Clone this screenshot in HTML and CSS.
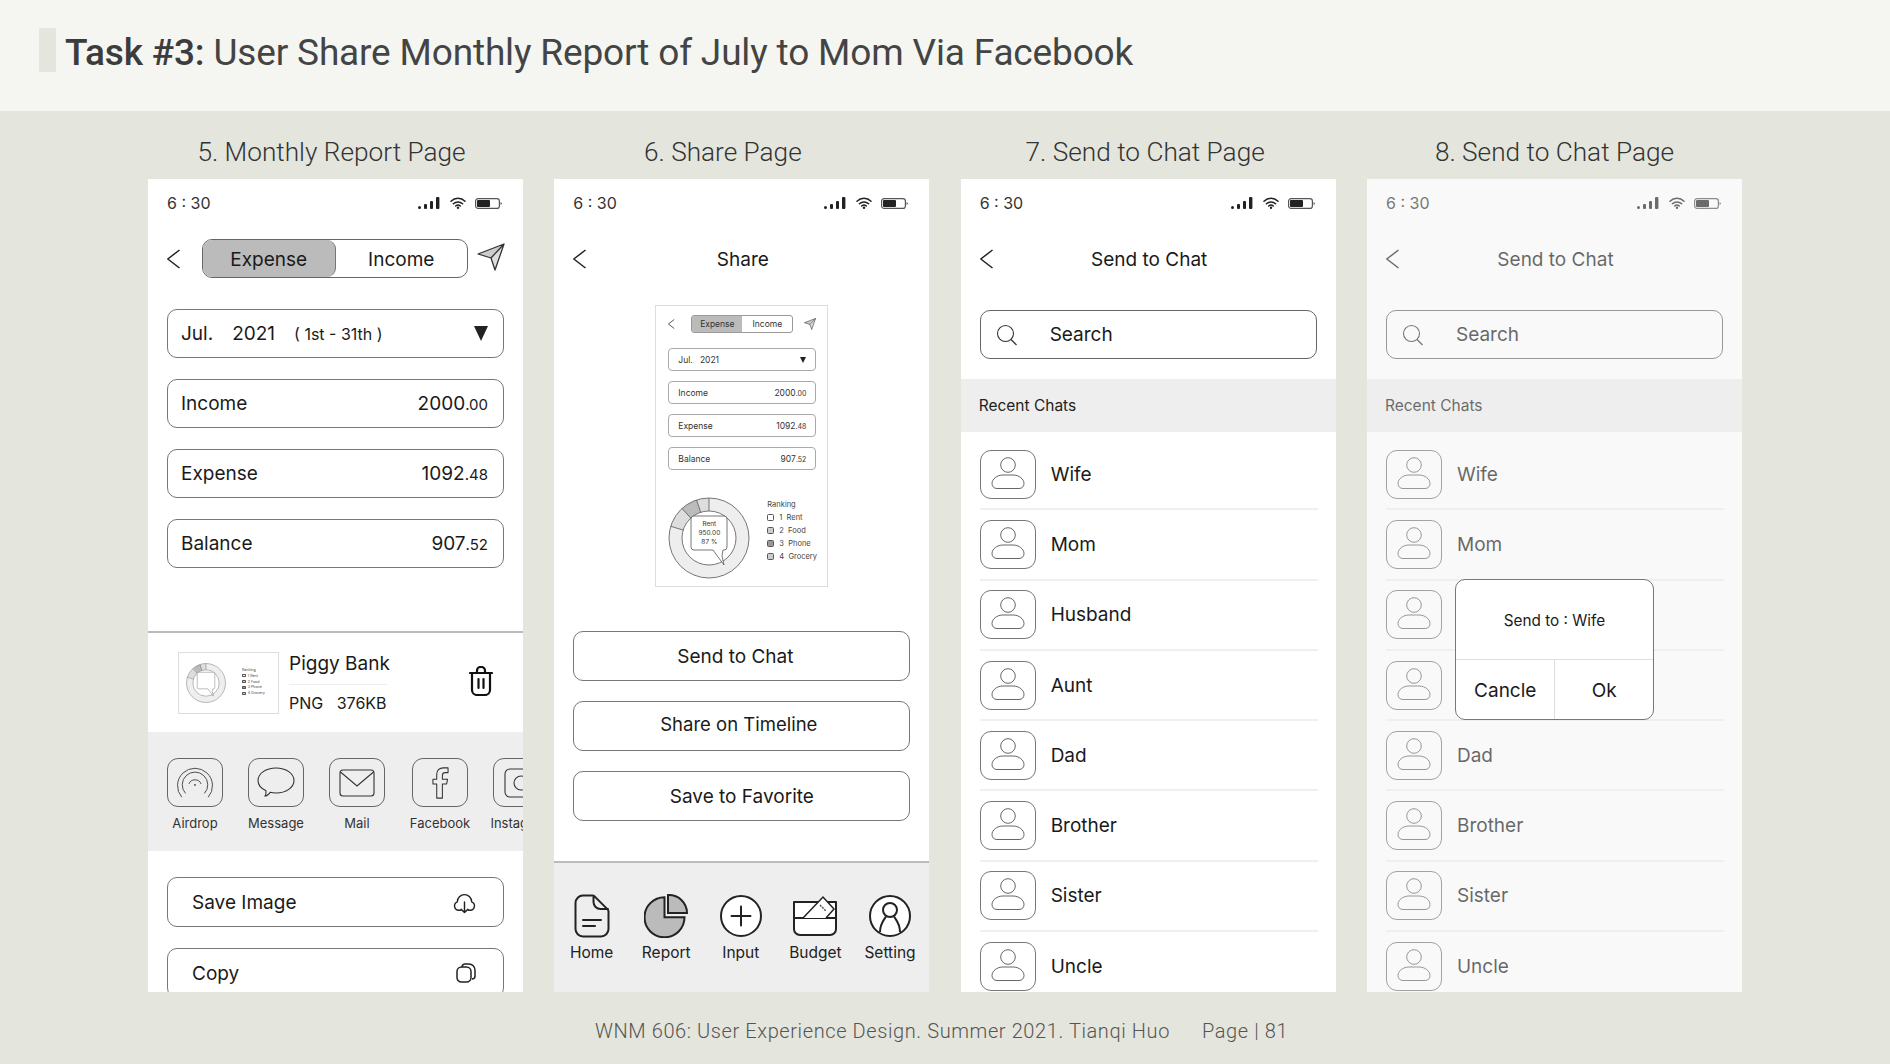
FILE: index.html
```html
<!DOCTYPE html>
<html lang="en">
<head>
    <meta charset="UTF-8">
    <title>Task #3</title>
    <link rel="stylesheet" href="styles.css">
</head>
<body>
    <!-- shared icons -->
    <svg class="defs" width="0" height="0">
        <symbol id="i-signal" viewBox="0 0 22 12"><rect x="0" y="9" width="3" height="3" rx="1.5"/><rect x="6" y="7" width="3" height="5" rx="1"/><rect x="12" y="4" width="3" height="8" rx="1"/><rect x="18" y="0" width="3.4" height="12" rx="1"/></symbol>
        <symbol id="i-wifi" viewBox="0 0 16 12"><path d="M1 4.2a10 10 0 0 1 14 0M3.4 6.8a6.6 6.6 0 0 1 9.2 0M5.7 9a3.4 3.4 0 0 1 4.6 0" fill="none" stroke="#222" stroke-width="1.5" stroke-linecap="round"/><circle cx="8" cy="10.8" r="1.2" fill="#222"/></symbol>
        <symbol id="i-battery" viewBox="0 0 27 11"><rect x=".6" y=".6" width="23.8" height="9.8" rx="2.5" fill="#fff" stroke="#555" stroke-width="1.2"/><rect x="2" y="2" width="13" height="7" rx="1" fill="#222"/><path d="M25.6 3.8 27 5.5l-1.4 1.7z" fill="#444"/></symbol>
        <symbol id="i-back" viewBox="0 0 14 20"><path d="M12.500 1 .8 10l11.700 9" fill="none" stroke="#222" stroke-width="1.5"/></symbol>
        <symbol id="i-send" viewBox="0 0 28 28"><path d="M1 11 27 1 14 15Z" fill="#ccc"/><path d="M27 1 14 15l4 12Z" fill="#ddd"/><path d="M1 11 27 1 18 27 14 15ZM14 15 27 1" fill="none" stroke="#333" stroke-width="1.3" stroke-linejoin="round"/></symbol>
        <symbol id="i-donut" viewBox="0 0 82 82">
            <g fill="none" stroke-width="13" transform="rotate(-90 41 41)">
                <circle cx="41" cy="41" r="33.5" pathLength="360" stroke="#eee" stroke-dasharray="287 73"/>
                <circle cx="41" cy="41" r="33.5" pathLength="360" stroke="#ddd" stroke-dasharray="30.5 329.5" stroke-dashoffset="-287"/>
                <circle cx="41" cy="41" r="33.5" pathLength="360" stroke="#bbb" stroke-dasharray="24.5 335.5" stroke-dashoffset="-317.5"/>
                <circle cx="41" cy="41" r="33.5" pathLength="360" stroke="#ddd" stroke-dasharray="18 342" stroke-dashoffset="-342"/>
            </g>
            <g fill="none" stroke="#555" stroke-width=".8">
                <circle cx="41" cy="41" r="40"/><circle cx="41" cy="41" r="27"/>
                <path d="M41 1v13M28.6 3 32.7 15.3M14 11.5 22.8 21.1M2.8 29.3 15.2 33.1"/>
            </g>
            <path d="M26 19h30a3 3 0 0 1 3 3v28a3 3 0 0 1-3 3h-1l-1 6 2 9-11-15H26a3 3 0 0 1-3-3V22a3 3 0 0 1 3-3Z" fill="#fff" stroke="#555" stroke-width=".8"/>
        </symbol>
        <symbol id="i-trash" viewBox="0 0 24 30"><path d="M1 7h22M8 6V4.500a3.500 3.500 0 0 1 3.500-3.500h1a3.500 3.500 0 0 1 3.500 3.500V6M3 7v17a5 5 0 0 0 5 5h8a5 5 0 0 0 5-5V7M9.500 13v9M14.500 13v9" fill="none" stroke="#111" stroke-width="2.200" stroke-linecap="round"/></symbol>
        <symbol id="i-airdrop" viewBox="0 0 40 36"><path d="M6 33A18.500 18.500 0 1 1 34 33M10 29A13.500 13.500 0 1 1 30 29" fill="none" stroke="#444" stroke-width="1"/><path d="M13.500 19A7 7 0 0 1 26.500 19" fill="none" stroke="#444" stroke-width="1"/><circle cx="20" cy="20" r="1" fill="#444"/></symbol>
        <symbol id="i-message" viewBox="0 0 38 32"><path d="M19 1c10 0 18 5.600 18 12.500S29 26 19 26c-2 0-4-.200-5.800-.700C11.500 27.500 9.500 29 8 29c.800-1.200 1.200-3 1-5.300C4.200 21.500 1 17.800 1 13.500 1 6.600 9 1 19 1Z" fill="none" stroke="#333" stroke-width="1.100"/></symbol>
        <symbol id="i-mail" viewBox="0 0 36 28"><rect x="1" y="1" width="34" height="26" rx="3" fill="none" stroke="#333" stroke-width="1.100"/><path d="M1.500 3 18 17 34.500 3" fill="none" stroke="#333" stroke-width="1.100"/></symbol>
        <symbol id="i-facebook" viewBox="0 0 18 34"><path d="M5 33V18H1v-5h4V8c0-5 3-7 7-7h5v5h-3c-2 0-3 1-3 3v4h5.500l-1 5H11v15Z" fill="none" stroke="#333" stroke-width="1.100" stroke-linejoin="round"/></symbol>
        <symbol id="i-insta" viewBox="0 0 34 30"><rect x="1" y="1" width="32" height="28" rx="5" fill="none" stroke="#333" stroke-width="1.100"/><circle cx="17" cy="15" r="7" fill="none" stroke="#333" stroke-width="1.100"/></symbol>
        <symbol id="i-cloud" viewBox="0 0 24 24"><path d="M8 20H6a4.500 4.500 0 0 1-1.500-8.700A7.500 7.500 0 0 1 19.500 11.300 4.500 4.500 0 0 1 18 20h-2M12 11.500v11M8.500 19l3.500 3.500 3.500-3.500" fill="none" stroke="#222" stroke-width="1.500" stroke-linecap="round" stroke-linejoin="round"/></symbol>
        <symbol id="i-copy" viewBox="0 0 20 20"><path d="M6 5V4a3 3 0 0 1 3-3h4a6 6 0 0 1 6 6v6a3 3 0 0 1-3 3" fill="none" stroke="#222" stroke-width="1.500"/><rect x="1" y="4" width="14" height="15" rx="4.500" fill="#fff" stroke="#222" stroke-width="1.500"/></symbol>
        <symbol id="i-home" viewBox="0 0 36 44"><path d="M9 1.500h9.500a3 3 0 0 1 2.100.900L33.600 15.400a3 3 0 0 1 .900 2.100V35a7.500 7.500 0 0 1-7.500 7.500H9A7.500 7.500 0 0 1 1.500 35V9A7.500 7.500 0 0 1 9 1.500ZM19.500 2v6a7 7 0 0 0 7 7H34M9 26h18M9 32h12" fill="none" stroke="#222" stroke-width="2" stroke-linecap="round"/></symbol>
        <symbol id="i-report" viewBox="0 0 44 44"><path d="M20.500 3.300A20 20 0 1 0 40.500 23.300H20.500Z" fill="#bbb" stroke="#222" stroke-width="2"/><path d="M24 1A18 18 0 0 1 43 19H24Z" fill="#bbb" stroke="#222" stroke-width="2"/></symbol>
        <symbol id="i-input" viewBox="0 0 42 42"><circle cx="21" cy="21" r="20" fill="#fff" stroke="#222" stroke-width="2"/><path d="M21 11.500v19M11.500 21h19" stroke="#222" stroke-width="2" stroke-linecap="round"/></symbol>
        <symbol id="i-budget" viewBox="0 0 44 40"><path d="M1 6h42v27a6 6 0 0 1-6 6H7a6 6 0 0 1-6-6ZM1 22h42" fill="#fff" stroke="#222" stroke-width="2" stroke-linejoin="round"/><path d="M10 22 30 1l11 12-8 9" fill="#fff" stroke="#222" stroke-width="1.500"/><path d="M27 9l6 6" stroke="#555" stroke-width="1.500" stroke-dasharray="2 1"/></symbol>
        <symbol id="i-setting" viewBox="0 0 42 42"><circle cx="21" cy="21" r="20" fill="#fff" stroke="#222" stroke-width="2"/><circle cx="21" cy="15" r="7" fill="none" stroke="#222" stroke-width="2"/><path d="M11 37c0-8 3-11 6-15.500M31 37c0-8-3-11-6-15.500" fill="none" stroke="#222" stroke-width="2"/></symbol>
        <symbol id="i-search" viewBox="0 0 22 22"><circle cx="9.500" cy="9.500" r="8" fill="none" stroke="#333" stroke-width="1.100"/><path d="M15 15.500 20.500 21" stroke="#333" stroke-width="1.300"/></symbol>
        <symbol id="i-avatar" viewBox="0 0 56 49"><circle cx="28" cy="15" r="7.300" fill="none" stroke="#555" stroke-width=".9"/><path d="M23 25h10c6 0 11 4 11 8.500 0 3-2 5-5 5H17c-3 0-5-2-5-5C12 29 17 25 23 25Z" fill="none" stroke="#555" stroke-width=".9"/></symbol>
    </svg>

    <header class="topbar">
        <span class="mark"></span>
        <h1><b>Task #3:</b> User Share Monthly Report of July to Mom Via Facebook</h1>
    </header>

    <main class="board">
        <h2 class="col-title nudge-a">5. Monthly Report Page</h2>
        <h2 class="col-title nudge-b">6. Share Page</h2>
        <h2 class="col-title nudge-c">7. Send to Chat Page</h2>
        <h2 class="col-title">8. Send to Chat Page</h2>

        <!-- 5 -->
        <section class="phone">
            <div class="status">
                <span>6 : 30</span>
                <span class="status-icons"><svg class="ic-signal"><use href="#i-signal"/></svg><svg class="ic-wifi"><use href="#i-wifi"/></svg><svg class="ic-battery"><use href="#i-battery"/></svg></span>
            </div>
            <div class="nav nav-seg">
                <svg class="ic-back"><use href="#i-back"/></svg>
                <div class="seg"><span class="seg-on">Expense</span><span>Income</span></div>
                <svg class="ic-send"><use href="#i-send"/></svg>
            </div>
            <div class="fields">
                <div class="field"><span class="date"><span>Jul.</span><span>2021</span><small>( 1st - 31th )</small></span><span class="tri"></span></div>
                <div class="field"><span>Income</span><span>2000<small>.00</small></span></div>
                <div class="field"><span>Expense</span><span>1092<small>.48</small></span></div>
                <div class="field"><span>Balance</span><span>907<small>.52</small></span></div>
            </div>
            <div class="file">
                <div class="file-thumb">
                    <svg class="file-donut"><use href="#i-donut"/></svg>
                    <div class="legend">
                        <p>Ranking</p>
                        <p><i></i>1 Rent</p>
                        <p><i class="s2"></i>2 Food</p>
                        <p><i class="s3"></i>3 Phone</p>
                        <p><i class="s2"></i>4 Grocery</p>
                    </div>
                </div>
                <div class="file-info">
                    <div class="file-name">Piggy Bank</div>
                    <div class="file-meta">PNG&nbsp;&nbsp;&nbsp;376KB</div>
                </div>
                <svg class="ic-trash"><use href="#i-trash"/></svg>
            </div>
            <div class="share-band">
                <div class="share-item"><div class="tile"><svg class="s-air"><use href="#i-airdrop"/></svg></div><span>Airdrop</span></div>
                <div class="share-item"><div class="tile"><svg class="s-msg"><use href="#i-message"/></svg></div><span>Message</span></div>
                <div class="share-item"><div class="tile"><svg class="s-mail"><use href="#i-mail"/></svg></div><span>Mail</span></div>
                <div class="share-item fb"><div class="tile"><svg class="s-fb"><use href="#i-facebook"/></svg></div><span>Facebook</span></div>
                <div class="share-item"><div class="tile"><svg class="s-ins"><use href="#i-insta"/></svg></div><span>Instagram</span></div>
            </div>
            <div class="actions">
                <div class="action"><span>Save Image</span><svg class="ic-cloud"><use href="#i-cloud"/></svg></div>
                <div class="action"><span>Copy</span><svg class="ic-copy"><use href="#i-copy"/></svg></div>
            </div>
        </section>

        <!-- 6 -->
        <section class="phone">
            <div class="status">
                <span>6 : 30</span>
                <span class="status-icons"><svg class="ic-signal"><use href="#i-signal"/></svg><svg class="ic-wifi"><use href="#i-wifi"/></svg><svg class="ic-battery"><use href="#i-battery"/></svg></span>
            </div>
            <div class="nav">
                <svg class="ic-back"><use href="#i-back"/></svg>
                <div class="nav-title">Share</div>
            </div>
            <div class="mini">
                <div class="mini-nav">
                    <svg class="mini-back"><use href="#i-back"/></svg>
                    <div class="mini-seg"><span class="seg-on">Expense</span><span>Income</span></div>
                    <svg class="mini-send"><use href="#i-send"/></svg>
                </div>
                <div class="mini-fields">
                    <div class="mini-field"><span>Jul.&nbsp;&nbsp;&nbsp;2021</span><span class="mini-tri"></span></div>
                    <div class="mini-field"><span>Income</span><span>2000<small>.00</small></span></div>
                    <div class="mini-field"><span>Expense</span><span>1092<small>.48</small></span></div>
                    <div class="mini-field"><span>Balance</span><span>907<small>.52</small></span></div>
                </div>
                <div class="mini-chart">
                    <div class="mini-donut">
                        <svg><use href="#i-donut"/></svg>
                        <div class="bubble-text"><span>Rent</span><span>950.00</span><span>87 %</span></div>
                    </div>
                    <div class="legend legend-big">
                        <p>Ranking</p>
                        <p><i></i>1&nbsp;&nbsp;Rent</p>
                        <p><i class="s2"></i>2&nbsp;&nbsp;Food</p>
                        <p><i class="s3"></i>3&nbsp;&nbsp;Phone</p>
                        <p><i class="s2"></i>4&nbsp;&nbsp;Grocery</p>
                    </div>
                </div>
            </div>
            <div class="share-buttons">
                <div class="btn pull-6">Send to Chat</div>
                <div class="btn pull-3">Share on Timeline</div>
                <div class="btn">Save to Favorite</div>
            </div>
            <nav class="tabbar">
                <div class="tab"><svg class="t-home"><use href="#i-home"/></svg><span>Home</span></div>
                <div class="tab"><svg class="t-report"><use href="#i-report"/></svg><span>Report</span></div>
                <div class="tab"><svg class="t-input"><use href="#i-input"/></svg><span>Input</span></div>
                <div class="tab"><svg class="t-budget"><use href="#i-budget"/></svg><span>Budget</span></div>
                <div class="tab"><svg class="t-setting"><use href="#i-setting"/></svg><span>Setting</span></div>
            </nav>
        </section>

        <!-- 7 -->
        <section class="phone">
            <div class="status">
                <span>6 : 30</span>
                <span class="status-icons"><svg class="ic-signal"><use href="#i-signal"/></svg><svg class="ic-wifi"><use href="#i-wifi"/></svg><svg class="ic-battery"><use href="#i-battery"/></svg></span>
            </div>
            <div class="nav">
                <svg class="ic-back"><use href="#i-back"/></svg>
                <div class="nav-title">Send to Chat</div>
            </div>
            <div class="search"><svg class="ic-search"><use href="#i-search"/></svg><span>Search</span></div>
            <div class="recent">Recent Chats</div>
            <div class="chats">
                <div class="chat"><div class="tile"><svg class="s-avatar"><use href="#i-avatar"/></svg></div><span>Wife</span></div>
                <div class="chat"><div class="tile"><svg class="s-avatar"><use href="#i-avatar"/></svg></div><span>Mom</span></div>
                <div class="chat"><div class="tile"><svg class="s-avatar"><use href="#i-avatar"/></svg></div><span>Husband</span></div>
                <div class="chat"><div class="tile"><svg class="s-avatar"><use href="#i-avatar"/></svg></div><span>Aunt</span></div>
                <div class="chat"><div class="tile"><svg class="s-avatar"><use href="#i-avatar"/></svg></div><span>Dad</span></div>
                <div class="chat"><div class="tile"><svg class="s-avatar"><use href="#i-avatar"/></svg></div><span>Brother</span></div>
                <div class="chat"><div class="tile"><svg class="s-avatar"><use href="#i-avatar"/></svg></div><span>Sister</span></div>
                <div class="chat"><div class="tile"><svg class="s-avatar"><use href="#i-avatar"/></svg></div><span>Uncle</span></div>
            </div>
        </section>

        <!-- 8 -->
        <section class="phone">
            <div class="status">
                <span>6 : 30</span>
                <span class="status-icons"><svg class="ic-signal"><use href="#i-signal"/></svg><svg class="ic-wifi"><use href="#i-wifi"/></svg><svg class="ic-battery"><use href="#i-battery"/></svg></span>
            </div>
            <div class="nav">
                <svg class="ic-back"><use href="#i-back"/></svg>
                <div class="nav-title">Send to Chat</div>
            </div>
            <div class="search"><svg class="ic-search"><use href="#i-search"/></svg><span>Search</span></div>
            <div class="recent">Recent Chats</div>
            <div class="chats">
                <div class="chat"><div class="tile"><svg class="s-avatar"><use href="#i-avatar"/></svg></div><span>Wife</span></div>
                <div class="chat"><div class="tile"><svg class="s-avatar"><use href="#i-avatar"/></svg></div><span>Mom</span></div>
                <div class="chat"><div class="tile"><svg class="s-avatar"><use href="#i-avatar"/></svg></div><span>Husband</span></div>
                <div class="chat"><div class="tile"><svg class="s-avatar"><use href="#i-avatar"/></svg></div><span>Aunt</span></div>
                <div class="chat"><div class="tile"><svg class="s-avatar"><use href="#i-avatar"/></svg></div><span>Dad</span></div>
                <div class="chat"><div class="tile"><svg class="s-avatar"><use href="#i-avatar"/></svg></div><span>Brother</span></div>
                <div class="chat"><div class="tile"><svg class="s-avatar"><use href="#i-avatar"/></svg></div><span>Sister</span></div>
                <div class="chat"><div class="tile"><svg class="s-avatar"><use href="#i-avatar"/></svg></div><span>Uncle</span></div>
            </div>
            <div class="dim"></div>
            <div class="dialog">
                <div class="dialog-msg">Send to : Wife</div>
                <div class="dialog-btns"><span>Cancle</span><span>Ok</span></div>
            </div>
        </section>
    </main>

    <footer class="foot">
        <span>WNM 606: User Experience Design. Summer 2021. Tianqi Huo</span>
        <span>Page | 81</span>
    </footer>
</body>
</html>
```

FILE: styles.css
```css
* {
    box-sizing: border-box;
}

body {
    margin: 0;
    width: 1890px;
    height: 1064px;
    overflow: hidden;
    background-color: #e4e5dd;
    font-family: Inter, "Liberation Sans", sans-serif;
    color: #1a1a1a;
}

.defs {
    position: absolute;
}

svg {
    display: block;
    flex: none;
}

/* header */
.topbar {
    height: 111px;
    background-color: #f5f6f2;
    display: flex;
    align-items: center;
    padding: 0 0 6px 39px;
}

.mark {
    width: 17px;
    height: 44px;
    background-color: #e4e5dd;
    margin: 0 9px 5px 0;
}

.topbar h1 {
    margin: 0;
    font-family: Roboto, sans-serif;
    font-size: 37px;
    font-weight: 400;
    letter-spacing: -.16px;
    color: #444;
    white-space: nowrap;
}

.topbar b {
    font-weight: 500;
    color: #3c3c3c;
}

/* columns */
.board {
    display: grid;
    grid-template-columns: repeat(4, 375px);
    grid-template-rows: 68px 813px;
    column-gap: 31.33px;
    padding-left: 148px;
}

.col-title {
    margin: 0;
    display: flex;
    justify-content: center;
    align-items: center;
    padding-top: 14px;
    font-family: Roboto, sans-serif;
    font-size: 26.200px;
    font-weight: 300;
    color: #333;
    white-space: nowrap;
}

.nudge-a {
    padding-right: 8px;
}

.nudge-b {
    padding-right: 38px;
}

.nudge-c {
    padding-right: 6px;
}

.phone {
    position: relative;
    background-color: #fff;
    overflow: hidden;
    display: flex;
    flex-direction: column;
    font-size: 19px;
}

.phone > * {
    flex: none;
}

.status {
    height: 48px;
    padding: 0 21px 0 19px;
    display: flex;
    justify-content: space-between;
    align-items: center;
    font-size: 16px;
    color: #333;
}

.status-icons {
    display: flex;
    align-items: center;
}

.ic-signal {
    width: 22px;
    height: 12px;
    fill: #222;
}

.ic-wifi {
    width: 16px;
    height: 12px;
    margin-left: 10px;
}

.ic-battery {
    width: 27px;
    height: 11px;
    margin-left: 9px;
}

.nav {
    height: 39px;
    margin-top: 12px;
    padding: 0 19px;
    position: relative;
    display: flex;
    align-items: center;
}

.nav-seg {
    padding-right: 0;
}

.ic-back {
    width: 14px;
    height: 20px;
}

.nav-title {
    flex: 1;
    text-align: center;
    padding: 2px 12px 0 0;
}

/* report page */
.seg {
    width: 266px;
    height: 39px;
    flex: none;
    margin-left: 21px;
    border: 1px solid #666;
    border-radius: 10px;
    display: flex;
}

.seg span {
    flex: 1;
    display: flex;
    align-items: center;
    justify-content: center;
    padding-top: 1px;
}

.seg .seg-on {
    background-color: #bbb;
    border-right: 1px solid #777;
    border-radius: 9px;
}

.ic-send {
    width: 28px;
    height: 28px;
    margin-left: 9px;
    margin-top: -3px;
}

.fields {
    margin-top: 31px;
    padding: 0 19px;
    display: flex;
    flex-direction: column;
    gap: 21px;
}

.field {
    height: 49px;
    padding: 0 15px 0 13px;
    border: 1px solid #777;
    border-radius: 10px;
    display: flex;
    justify-content: space-between;
    align-items: center;
}

.field small {
    font-size: 15px;
}

.date {
    display: flex;
    align-items: center;
    gap: 19px;
}

.date small {
    font-size: 16px;
}

.tri {
    width: 0;
    height: 0;
    border-left: 7px solid transparent;
    border-right: 7px solid transparent;
    border-top: 15px solid #222;
}

.file {
    margin-top: 63px;
    height: 101px;
    border-top: 2px solid #bbb;
    padding: 0 30px 0 30px;
    display: flex;
    align-items: center;
}

.file-thumb {
    width: 101px;
    height: 62px;
    border: 1px solid #ddd;
    display: flex;
    align-items: center;
    padding-left: 7px;
    gap: 16px;
}

.file-donut {
    width: 40px;
    height: 40px;
}

.legend {
    font-size: 3.6px;
    color: #444;
}

.legend p {
    margin: 0 0 .55em;
    display: flex;
    align-items: center;
    gap: .6em;
    white-space: nowrap;
}

.legend i {
    flex: none;
    width: 1em;
    height: 1em;
    border: .2px solid #555;
    border-radius: .2em;
}

.legend .s2 {
    background-color: #ccc;
}

.legend .s3 {
    background-color: #999;
}

.file-info {
    margin-left: 10px;
    width: 98px;
    font-size: 19px;
    white-space: nowrap;
}

.file-name {
    padding-bottom: 9px;
    border-bottom: 1px solid #eee;
}

.file-meta {
    padding-top: 8px;
    font-size: 16px;
}

.ic-trash {
    width: 24px;
    height: 30px;
    margin: 0 0 4px auto;
}

.share-band {
    height: 119px;
    background-color: #eee;
    padding: 26px 0 0 19px;
    display: flex;
    gap: 25px;
    overflow: hidden;
}

.share-item {
    width: 56px;
    flex: none;
    display: flex;
    flex-direction: column;
    align-items: center;
    font-size: 13px;
    white-space: nowrap;
    color: #333;
}

.share-item span {
    margin-top: 8px;
}

.fb {
    margin-left: 2px;
}

.tile {
    width: 56px;
    height: 49px;
    flex: none;
    border: 1px solid #666;
    border-radius: 11px;
    display: flex;
    align-items: center;
    justify-content: center;
}

.s-air {
    width: 38px;
    height: 34px;
}

.s-msg {
    width: 38px;
    height: 32px;
}

.s-mail {
    width: 36px;
    height: 28px;
}

.s-fb {
    width: 17px;
    height: 34px;
}

.s-ins {
    width: 34px;
    height: 30px;
}

.actions {
    padding: 26px 19px 0;
    display: flex;
    flex-direction: column;
    gap: 21px;
}

.action {
    height: 50px;
    flex: none;
    padding: 0 27px 0 24px;
    border: 1px solid #777;
    border-radius: 10px;
    display: flex;
    justify-content: space-between;
    align-items: center;
}

.ic-cloud {
    width: 23px;
    height: 23px;
}

.ic-copy {
    width: 20px;
    height: 20px;
}

/* share page */
.mini {
    width: 173px;
    height: 282px;
    margin: 27px 0 0 101px;
    border: 1px solid #ddd;
    padding: 9px 11px 0 12px;
    font-size: 8.500px;
    color: #333;
}

.mini-nav {
    height: 18px;
    display: flex;
    align-items: center;
}

.mini-back {
    width: 7px;
    height: 10px;
}

.mini-seg {
    width: 103px;
    height: 18px;
    margin-left: 16px;
    border: 1px solid #999;
    border-radius: 3px;
    display: flex;
}

.mini-seg span {
    flex: 1;
    display: flex;
    align-items: center;
    justify-content: center;
}

.mini-seg .seg-on {
    background-color: #bbb;
}

.mini-send {
    width: 12px;
    height: 12px;
    margin-left: 11px;
}

.mini-fields {
    margin-top: 15px;
    width: 148px;
    display: flex;
    flex-direction: column;
    gap: 10px;
}

.mini-field {
    height: 23px;
    padding: 0 9px;
    border: 1px solid #aaa;
    border-radius: 4px;
    display: flex;
    justify-content: space-between;
    align-items: center;
}

.mini-field small {
    font-size: 7px;
}

.mini-tri {
    width: 0;
    height: 0;
    border-left: 3px solid transparent;
    border-right: 3px solid transparent;
    border-top: 6px solid #222;
}

.mini-chart {
    margin-top: 27px;
    display: flex;
    gap: 17px;
}

.mini-donut {
    position: relative;
    width: 82px;
    height: 82px;
}

.mini-donut svg {
    width: 82px;
    height: 82px;
}

.bubble-text {
    position: absolute;
    top: 19px;
    left: 23px;
    width: 36px;
    height: 34px;
    display: flex;
    flex-direction: column;
    align-items: center;
    justify-content: center;
    gap: 1px;
    font-size: 6.500px;
}

.legend-big {
    font-size: 7.500px;
    margin-top: 3px;
}

.legend-big p {
    margin-bottom: 4px;
    height: 9px;
    gap: 5px;
}

.legend-big i {
    width: 7px;
    height: 7px;
    border-width: .7px;
    border-radius: 1.500px;
}

.share-buttons {
    margin-top: 44px;
    padding: 0 19px;
    display: flex;
    flex-direction: column;
    gap: 20px;
}

.btn {
    height: 50px;
    border: 1px solid #777;
    border-radius: 10px;
    display: flex;
    align-items: center;
    justify-content: center;
}

.pull-6 {
    padding-right: 13px;
}

.pull-3 {
    padding: 0 6px 4px 0;
    font-size: 18.500px;
}

.tabbar {
    margin-top: auto;
    height: 131px;
    background-color: #eee;
    border-top: 2px solid #bbb;
    padding: 31px 2px 0 0;
    display: grid;
    grid-template-columns: repeat(5, 1fr);
    align-content: start;
}

.tab {
    display: flex;
    flex-direction: column;
    align-items: center;
    font-size: 15.500px;
    color: #222;
}

.tab svg {
    height: 44px;
}

.tab span {
    margin-top: 5px;
}

.t-home {
    width: 36px;
}

.t-report {
    width: 44px;
}

.t-input {
    width: 42px;
}

.t-budget {
    width: 44px;
}

.t-setting {
    width: 42px;
}

/* send to chat */
.search {
    height: 49px;
    margin: 32px 19px 0;
    padding-left: 15px;
    border: 1px solid #666;
    border-radius: 10px;
    display: flex;
    align-items: center;
    gap: 32px;
}

.ic-search {
    width: 22px;
    height: 22px;
}

.recent {
    height: 53px;
    margin-top: 20px;
    padding-left: 18px;
    background-color: #eee;
    display: flex;
    align-items: center;
    font-size: 15.500px;
    color: #222;
}

.chats {
    padding: 8px 18px 0 19px;
}

.chat {
    height: 70.300px;
    border-bottom: 2px solid #f0f0f0;
    display: flex;
    align-items: center;
    gap: 15px;
}

.chat .tile {
    border-color: #777;
}

.s-avatar {
    width: 56px;
    height: 49px;
}

/* dimmed last phone */
.dim {
    position: absolute;
    inset: 0;
    background-color: rgba(238, 238, 238, .36);
}

.dialog {
    position: absolute;
    left: 88px;
    top: 400px;
    width: 199px;
    height: 141px;
    background-color: #fff;
    border: 1px solid #777;
    border-radius: 10px;
    display: flex;
    flex-direction: column;
}

.dialog-msg {
    height: 80px;
    padding-top: 2px;
    border-bottom: 1px solid #ddd;
    display: flex;
    align-items: center;
    justify-content: center;
    font-size: 15.300px;
}

.dialog-btns {
    flex: 1;
    display: grid;
    grid-template-columns: 1fr 1fr;
}

.dialog-btns span {
    display: flex;
    align-items: center;
    justify-content: center;
    padding-top: 2px;
}

.dialog-btns span + span {
    border-left: 1px solid #ddd;
}

/* footer */
.foot {
    height: 72px;
    padding: 6px 0 0 595px;
    display: flex;
    align-items: center;
    gap: 32px;
    font-family: Roboto, sans-serif;
    font-size: 20px;
    font-weight: 300;
    letter-spacing: .6px;
    color: #555;
}
```
